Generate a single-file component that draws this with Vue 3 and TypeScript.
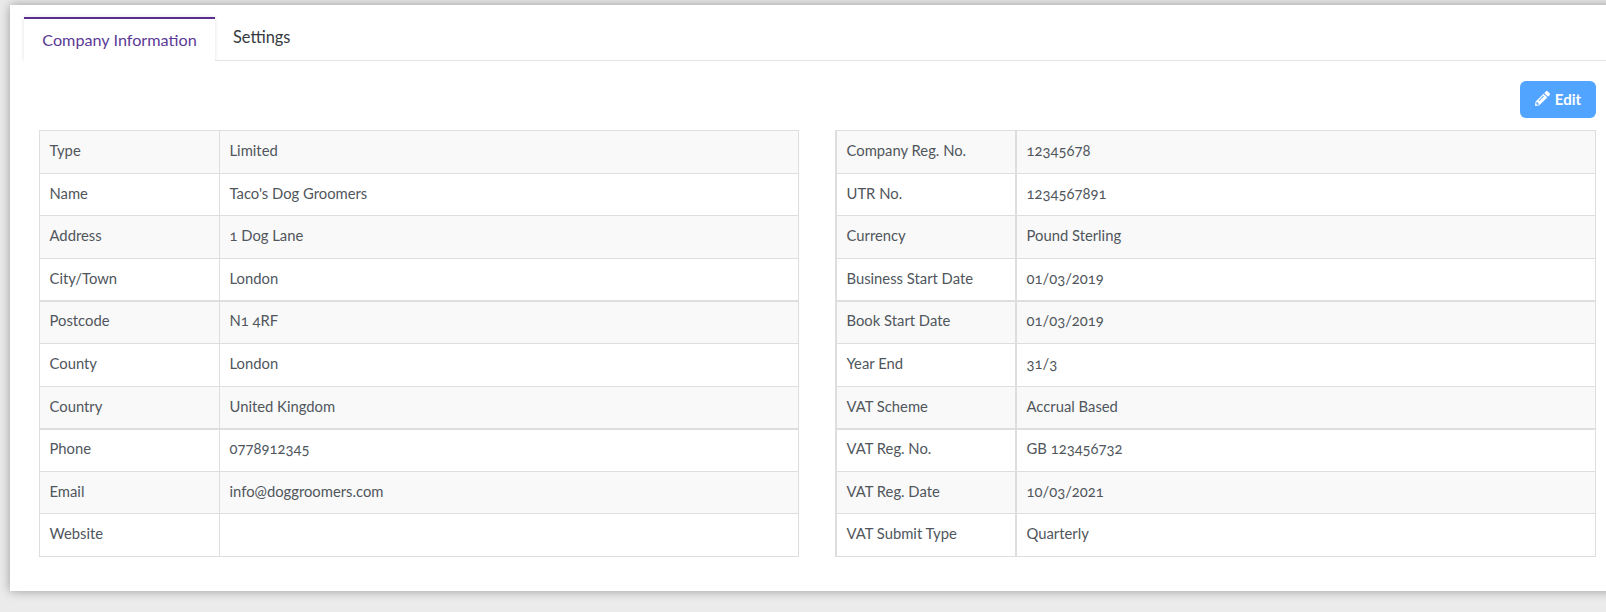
<script setup lang="ts">
interface Row { label: string; value: string; heavy?: boolean }

const leftRows: Row[] = [
  { label: 'Type', value: 'Limited' },
  { label: 'Name', value: "Taco's Dog Groomers" },
  { label: 'Address', value: '1 Dog Lane' },
  { label: 'City/Town', value: 'London', heavy: true },
  { label: 'Postcode', value: 'N1 4RF' },
  { label: 'County', value: 'London' },
  { label: 'Country', value: 'United Kingdom', heavy: true },
  { label: 'Phone', value: '0778912345' },
  { label: 'Email', value: 'info@doggroomers.com' },
  { label: 'Website', value: '' },
]

const rightRows: Row[] = [
  { label: 'Company Reg. No.', value: '12345678' },
  { label: 'UTR No.', value: '1234567891' },
  { label: 'Currency', value: 'Pound Sterling' },
  { label: 'Business Start Date', value: '01/03/2019', heavy: true },
  { label: 'Book Start Date', value: '01/03/2019' },
  { label: 'Year End', value: '31/3' },
  { label: 'VAT Scheme', value: 'Accrual Based', heavy: true },
  { label: 'VAT Reg. No.', value: 'GB 123456732' },
  { label: 'VAT Reg. Date', value: '10/03/2021' },
  { label: 'VAT Submit Type', value: 'Quarterly' },
]

const tables = [
  { key: 'left', rows: leftRows },
  { key: 'right', rows: rightRows },
]
</script>

<template>
  <div class="page">
    <div class="card">
      <ul class="tabs">
        <li class="tab active">Company Information</li>
        <li class="tab">Settings</li>
      </ul>
      <div class="content">
        <div class="actions">
          <button class="edit" type="button">
            <svg class="pencil" viewBox="0 0 512 512" aria-hidden="true">
              <path fill="currentColor" d="M497.9 142.1l-46.1 46.1c-4.7 4.7-12.3 4.7-17 0l-111-111c-4.7-4.7-4.7-12.3 0-17l46.1-46.1c18.7-18.7 49.1-18.7 67.9 0l60.1 60.1c18.8 18.7 18.8 49.1 0 67.9zM284.2 99.8L21.6 362.4.4 483.9c-2.9 16.4 11.4 30.6 27.8 27.8l121.5-21.3 262.6-262.6c4.7-4.7 4.7-12.3 0-17l-111-111c-4.8-4.7-12.4-4.7-17.1 0zM124.1 339.9c-5.5-5.5-5.5-14.3 0-19.8l154-154c5.5-5.5 14.3-5.5 19.8 0s5.5 14.3 0 19.8l-154 154c-5.5 5.5-14.3 5.5-19.8 0zM88 424h48v36.3l-64.5 11.3-31.1-31.1L51.7 376H88v48z" />
            </svg>
            <span>Edit</span>
          </button>
        </div>
        <div class="grid">
          <table v-for="t in tables" :key="t.key" class="info" :class="t.key">
            <tbody>
              <tr v-for="r in t.rows" :key="r.label" :class="{ heavy: r.heavy }">
                <td class="label">{{ r.label }}</td>
                <td>{{ r.value }}</td>
              </tr>
            </tbody>
          </table>
        </div>
      </div>
    </div>
  </div>
</template>

<style>
html, body { margin: 0; background: #ebebeb; overflow: hidden; }
</style>

<style scoped>
.page {
  height: 612px;
  overflow: hidden;
  padding: 5px 0 0 10px;
  box-sizing: border-box;
  background: #ebebeb;
  font-family: Lato, "Open Sans", sans-serif;
  font-size: 14.8px;
  font-variant-numeric: oldstyle-nums;
  color: #50565c;
}
.card {
  width: 1640px;
  height: 586px;
  background: #fff;
  box-shadow: 0 0 10px rgba(0, 0, 0, 0.35);
  padding: 12px 54px 0 14px;
  box-sizing: border-box;
}
.tabs {
  display: flex;
  list-style: none;
  margin: 0 -54px 0 0;
  padding: 0;
  height: 43px;
  border-bottom: 1px solid #e4e4e4;
}
.tab {
  padding: 10px 18px 0;
  height: 43px;
  box-sizing: border-box;
  color: #343a40;
  font-size: 16.4px;
}
.tab.active {
  width: 191px;
  padding: 11px 0 0;
  text-align: center;
  color: #5b3a96;
  background: #fff;
  border-top: 2px solid #5b2d90;
  box-shadow: 0 0 4px rgba(0, 0, 0, 0.12);
  clip-path: inset(-4px -4px 0 -4px);
  height: 44px;
  font-size: 16.2px;
}
.content { padding: 20px 0 0 15px; }
.actions {
  display: flex;
  justify-content: flex-end;
  height: 49px;
}
.edit {
  display: flex;
  align-items: center;
  justify-content: center;
  gap: 5px;
  width: 76px;
  height: 37px;
  border: 0;
  border-radius: 6px;
  background: #51a4ff;
  color: #fff;
  font: 700 15px Lato, sans-serif;
  padding: 0 0 2px;
}
.pencil { width: 15px; height: 15px; }
.grid {
  display: grid;
  grid-template-columns: 760px 761px;
  column-gap: 36px;
}
.info {
  width: 100%;
  border-collapse: collapse;
  table-layout: fixed;
}
.info td {
  border: 1px solid #dedede;
  padding: 9px 9.5px 11px;
  line-height: 21.6px;
  height: 21.6px;
}
.info .label { width: 160px; }
.right .label { width: 159px; }
.info tr:nth-child(odd) td { background: #f9f9f9; }
.info tr.heavy td { border-bottom: 2px solid #dedede; padding-bottom: 10.5px; }
.info tr.heavy + tr td { padding-top: 8.5px; }
.right td:first-child { border-left-width: 2px; }
.right td:nth-child(2) { border-left-width: 2px; }
</style>
